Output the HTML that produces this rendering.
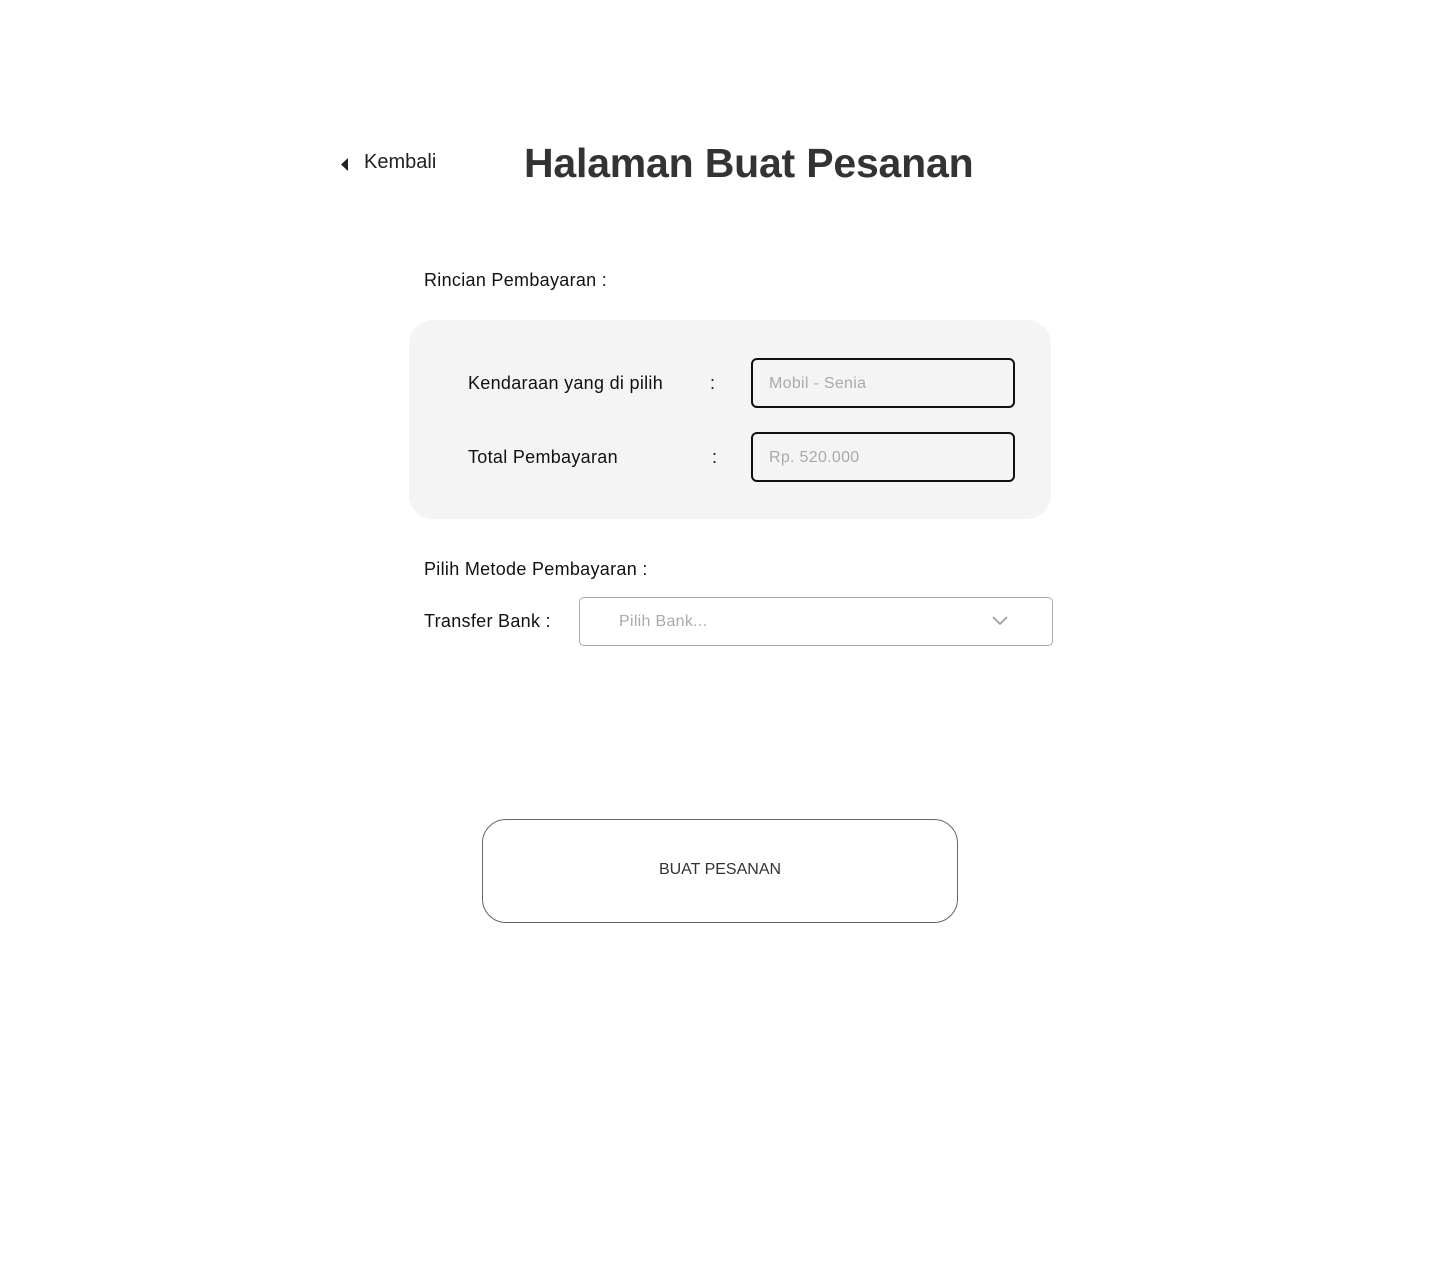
<!DOCTYPE html>
<html><head><meta charset="utf-8"><style>
*{margin:0;padding:0;box-sizing:border-box}
body{width:1440px;height:1283px;background:#fff;position:relative;font-family:"Liberation Sans",sans-serif;color:#111;overflow:hidden}
.a{position:absolute;white-space:nowrap}
.lbl{font-size:18px;line-height:22px;letter-spacing:0.3px}
.inp{position:absolute;border:2px solid #111;border-radius:6px;background:#f4f4f4;font-size:16px;color:#aaa;padding-left:16px;line-height:47px;letter-spacing:0.3px}
</style></head><body>
<svg class="a" style="left:340px;top:158px" width="9" height="13"><path d="M8 0 L1 6.5 L8 13Z" fill="#222"/></svg>
<div class="a" style="left:364px;top:150px;font-size:20px;line-height:24px;color:#222">Kembali</div>
<div class="a" style="left:524px;top:139px;font-size:41px;line-height:48px;font-weight:bold;color:#333;letter-spacing:-0.2px">Halaman Buat Pesanan</div>
<div class="a lbl" style="left:424px;top:269px">Rincian Pembayaran :</div>
<div class="a" style="left:409px;top:320px;width:642px;height:199px;background:#f4f4f4;border-radius:24px"></div>
<div class="a lbl" style="left:468px;top:372px">Kendaraan yang di pilih</div>
<div class="a lbl" style="left:710px;top:372px">:</div>
<div class="inp" style="left:751px;top:358px;width:264px;height:50px">Mobil - Senia</div>
<div class="a lbl" style="left:468px;top:446px">Total Pembayaran</div>
<div class="a lbl" style="left:712px;top:446px">:</div>
<div class="inp" style="left:751px;top:432px;width:264px;height:50px">Rp. 520.000</div>
<div class="a lbl" style="left:424px;top:558px">Pilih Metode Pembayaran :</div>
<div class="a lbl" style="left:424px;top:610px">Transfer Bank :</div>
<div class="a" style="left:579px;top:597px;width:474px;height:49px;border:1.5px solid #aaa;border-radius:5px;font-size:16px;color:#aaa;padding-left:39px;line-height:48px;letter-spacing:0.3px">Pilih Bank...</div>
<svg class="a" style="left:992px;top:616px" width="16" height="10"><path d="M1 1 L8 8 L15 1" fill="none" stroke="#999" stroke-width="1.6"/></svg>
<div class="a" style="left:482px;top:819px;width:476px;height:104px;border:1px solid #666;border-radius:24px;text-align:center;font-size:16px;line-height:100px;color:#333">BUAT PESANAN</div>
</body></html>
